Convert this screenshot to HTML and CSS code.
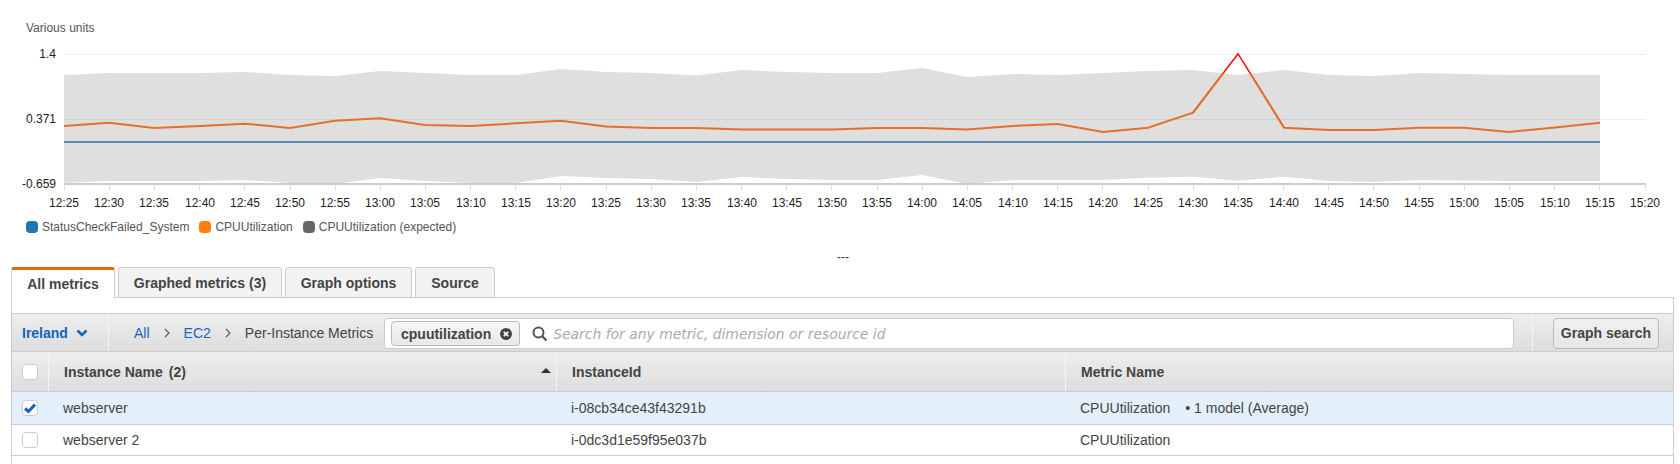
FILE: index.html
```html
<!DOCTYPE html>
<html lang="en">
<head>
<meta charset="utf-8">
<title>Metrics</title>
<link rel="stylesheet" href="styles.css">
</head>
<body>
<section class="chart">
  <svg class="plot" width="1680" height="216" viewBox="0 0 1680 216">
    <defs>
      <clipPath id="band-clip"><polygon points="64,75 109,73 154,73 200,73 245,72 290,75 335,76 380,71 425,73 471,75 516,75 561,69 606,72 651,73 696,75.5 742,70 787,72 832,73 877,73 922,68 967,77 1013,74 1058,75 1103,73 1148,71 1193,70 1238,75 1284,70 1329,75 1374,76 1419,73 1464,74 1509,75 1555,75 1600,75 1600,181 1555,181 1509,181 1464,180.5 1419,180 1374,182 1329,181 1284,176.7 1238,180.7 1193,176.7 1148,177.7 1103,180 1058,180 1013,180 967,184 922,175 877,180 832,180 787,179 742,177 696,182 651,179 606,178 561,176 516,183 471,183 425,181 380,178 335,184 290,183 245,180 200,181 154,181 109,181 64,183"/></clipPath>
    </defs>
    <text class="unit" x="26" y="32">Various units</text>
    <polygon class="band" points="64,75 109,73 154,73 200,73 245,72 290,75 335,76 380,71 425,73 471,75 516,75 561,69 606,72 651,73 696,75.5 742,70 787,72 832,73 877,73 922,68 967,77 1013,74 1058,75 1103,73 1148,71 1193,70 1238,75 1284,70 1329,75 1374,76 1419,73 1464,74 1509,75 1555,75 1600,75 1600,181 1555,181 1509,181 1464,180.5 1419,180 1374,182 1329,181 1284,176.7 1238,180.7 1193,176.7 1148,177.7 1103,180 1058,180 1013,180 967,184 922,175 877,180 832,180 787,179 742,177 696,182 651,179 606,178 561,176 516,183 471,183 425,181 380,178 335,184 290,183 245,180 200,181 154,181 109,181 64,183"/>
    <path class="grid" d="M64 54.5H1646M64 119.5H1646"/>
    <path class="axis" d="M64 184H1646"/>
    <path class="ticks" d="M64.5 185v5M109.5 185v5M154.5 185v5M199.5 185v5M244.5 185v5M290.5 185v5M335.5 185v5M380.5 185v5M425.5 185v5M470.5 185v5M515.5 185v5M560.5 185v5M606.5 185v5M651.5 185v5M696.5 185v5M741.5 185v5M786.5 185v5M831.5 185v5M877.5 185v5M922.5 185v5M967.5 185v5M1012.5 185v5M1057.5 185v5M1102.5 185v5M1148.5 185v5M1193.5 185v5M1238.5 185v5M1283.5 185v5M1328.5 185v5M1373.5 185v5M1419.5 185v5M1464.5 185v5M1509.5 185v5M1554.5 185v5M1599.5 185v5M1645.5 185v5"/>
    <path class="blue" d="M64 142H1600"/>
    <polyline class="red" points="1193,112.7 1238,53.7 1284,127.7"/>
    <polyline class="orange" clip-path="url(#band-clip)" points="64,126 109,122.7 154,128 200,126 245,123.7 290,128 335,120.7 380,118.3 425,125 471,126 516,123.3 561,120.7 606,126.4 651,128 696,128 742,129.6 787,129.6 832,129.6 877,128 922,128 967,129.6 1013,126 1058,124 1103,132 1148,127.7 1193,112.7 1238,53.7 1284,127.7 1329,130 1374,130 1419,127.7 1464,127.7 1509,132 1555,127.5 1600,122.7"/>
    <g class="ylabels">
      <text x="56" y="58">1.4</text>
      <text x="56" y="123">0.371</text>
      <text x="56" y="188">-0.659</text>
    </g>
    <g class="xlabels">
      <text x="64" y="207">12:25</text><text x="109" y="207">12:30</text><text x="154" y="207">12:35</text><text x="200" y="207">12:40</text><text x="245" y="207">12:45</text><text x="290" y="207">12:50</text><text x="335" y="207">12:55</text><text x="380" y="207">13:00</text><text x="425" y="207">13:05</text><text x="471" y="207">13:10</text><text x="516" y="207">13:15</text><text x="561" y="207">13:20</text><text x="606" y="207">13:25</text><text x="651" y="207">13:30</text><text x="696" y="207">13:35</text><text x="742" y="207">13:40</text><text x="787" y="207">13:45</text><text x="832" y="207">13:50</text><text x="877" y="207">13:55</text><text x="922" y="207">14:00</text><text x="967" y="207">14:05</text><text x="1013" y="207">14:10</text><text x="1058" y="207">14:15</text><text x="1103" y="207">14:20</text><text x="1148" y="207">14:25</text><text x="1193" y="207">14:30</text><text x="1238" y="207">14:35</text><text x="1284" y="207">14:40</text><text x="1329" y="207">14:45</text><text x="1374" y="207">14:50</text><text x="1419" y="207">14:55</text><text x="1464" y="207">15:00</text><text x="1509" y="207">15:05</text><text x="1555" y="207">15:10</text><text x="1600" y="207">15:15</text><text x="1645" y="207">15:20</text>
    </g>
  </svg>
  <ul class="legend">
    <li class="legend-item"><span class="swatch swatch-blue"></span>StatusCheckFailed_System</li>
    <li class="legend-item"><span class="swatch swatch-orange"></span>CPUUtilization</li>
    <li class="legend-item"><span class="swatch swatch-grey"></span>CPUUtilization (expected)</li>
  </ul>
  <div class="resize-handle">---</div>
</section>

<nav class="tabs">
  <div class="tab tab-active">All metrics</div>
  <div class="tab tab-2">Graphed metrics (3)</div>
  <div class="tab tab-3">Graph options</div>
  <div class="tab tab-4">Source</div>
</nav>

<section class="panel">
  <div class="filter-bar">
    <div class="region">Ireland
      <svg class="region-chevron" width="12" height="8" viewBox="0 0 12 8"><path d="M1.5 1.500 6 6l4.500-4.500" fill="none" stroke="#16b" stroke-width="2.600"/></svg>
    </div>
    <div class="crumbs">
      <a class="crumb-link crumb-all">All</a>
      <svg class="crumb-sep" width="6" height="10" viewBox="0 0 6 10"><path d="M1 1l4 4-4 4" fill="none" stroke="#555" stroke-width="1.100"/></svg>
      <a class="crumb-link crumb-ec2">EC2</a>
      <svg class="crumb-sep" width="6" height="10" viewBox="0 0 6 10"><path d="M1 1l4 4-4 4" fill="none" stroke="#555" stroke-width="1.100"/></svg>
      <span class="crumb-current">Per-Instance Metrics</span>
    </div>
    <div class="search">
      <div class="token">cpuutilization
        <svg class="token-x" width="12" height="12" viewBox="0 0 12 12"><circle cx="6" cy="6" r="6" fill="#444"/><path d="M3.800 3.800l4.400 4.400M8.200 3.800l-4.400 4.400" stroke="#fff" stroke-width="1.700"/></svg>
      </div>
      <svg class="search-icon" width="16" height="16" viewBox="0 0 16 16"><circle cx="6.500" cy="6.500" r="5" fill="none" stroke="#555" stroke-width="2"/><path d="M10 10l4.500 4.500" stroke="#555" stroke-width="2.400"/></svg>
      <span class="placeholder">Search for any metric, dimension or resource id</span>
    </div>
    <div class="graph-search"><div class="btn">Graph search</div></div>
  </div>

  <div class="row row-head">
    <div class="cell cell-check"><span class="box"></span></div>
    <div class="cell cell-name">Instance Name<span class="count">(2)</span>
      <svg class="sort" width="10" height="5" viewBox="0 0 10 5"><path d="M5 0l5 5H0z" fill="#333"/></svg>
    </div>
    <div class="cell cell-id">InstanceId</div>
    <div class="cell cell-metric">Metric Name</div>
  </div>
  <div class="row row-selected">
    <div class="cell cell-check"><span class="box"><svg width="12" height="10" viewBox="0 0 12 10"><path d="M1 5.500 4.500 8.500 11 1.500" fill="none" stroke="#16b" stroke-width="3"/></svg></span></div>
    <div class="cell cell-name">webserver</div>
    <div class="cell cell-id">i-08cb34ce43f43291b</div>
    <div class="cell cell-metric">CPUUtilization<span class="model">• 1 model (Average)</span></div>
  </div>
  <div class="row row-plain">
    <div class="cell cell-check"><span class="box"></span></div>
    <div class="cell cell-name">webserver 2</div>
    <div class="cell cell-id">i-0dc3d1e59f95e037b</div>
    <div class="cell cell-metric">CPUUtilization</div>
  </div>
</section>
</body>
</html>
```

FILE: styles.css
```css
* { box-sizing: border-box; }
html, body { margin: 0; height: 464px; overflow: hidden; background: #fff; }
body { font-family: "Liberation Sans", Arial, sans-serif; font-size: 14px; color: #444; }

/* chart */
.chart { height: 267px; }
.plot { display: block; font-size: 12px; }
.unit { fill: #555; }
.band { fill: #dfdfdf; }
.grid { stroke: #000; stroke-opacity: .07; stroke-width: 1; fill: none; }
.axis { stroke: #ccc; stroke-width: 2; fill: none; }
.ticks { stroke: #ddd; stroke-width: 1; fill: none; }
.blue { stroke: #5b8bb5; stroke-width: 2; fill: none; }
.red { stroke: #f00; stroke-width: 1.500; fill: none; }
.orange { stroke: #e4712b; stroke-width: 2; fill: none; }
.ylabels text { fill: #222; text-anchor: end; }
.xlabels text { fill: #222; text-anchor: middle; }
.legend { list-style: none; display: flex; gap: 10px; margin: 0; padding: 1px 0 0 26px; font-size: 12px; color: #555; height: 20px; }
.legend-item { display: flex; align-items: center; gap: 4px; line-height: 16px; }
.swatch { width: 12px; height: 12px; border-radius: 4px; display: block; }
.swatch-blue { background: #1f77b4; }
.swatch-orange { background: #ff7f0e; }
.swatch-grey { background: #666; }
.resize-handle { text-align: center; font-size: 12px; line-height: 14px; color: #333; margin-top: 14px; padding-left: 6px; }

/* tabs */
.tabs { display: flex; gap: 3px; padding-left: 11px; height: 31px; position: relative; z-index: 1; font-weight: bold; }
.tab { height: 31px; background: #f2f2f2; border: 1px solid #ccc; border-radius: 3px 3px 0 0; color: #444; text-align: center; line-height: 31px; }
.tab-active { width: 104px; background: #fff; border-top: 3px solid #dd6b10; border-bottom: 0; line-height: 29px; }
.tab-2 { width: 164px; }
.tab-3 { width: 127px; }
.tab-4 { width: 80px; }

/* panel */
.panel { margin: -1px 6px 0 11px; border: 1px solid #ccc; padding-top: 15px; height: 200px; }
.filter-bar { display: flex; height: 39px; border-top: 1px solid #ccc; border-bottom: 1px solid #ccc; background: linear-gradient(#eee, #ddd); }
.region { width: 97px; display: flex; align-items: center; gap: 8px; padding-left: 10px; color: #16b; font-weight: bold; border-right: 1px solid #f5f5f5; }
.crumbs { display: flex; align-items: center; padding-left: 25px; width: 275px; flex: none; padding-top: 1px; }
.crumb-link { color: #16b; }
.crumb-sep { margin: 0 14px 0 14px; }
.crumb-current { color: #444; white-space: nowrap; }
.search { width: 1130px; height: 31px; margin-top: 4px; background: #fff; border: 1px solid #ccc; border-radius: 4px; display: flex; align-items: center; padding-left: 6px; }
.token { display: flex; align-items: center; gap: 9px; height: 25px; padding: 0 7px 0 9px; font-weight: bold; border: 1px solid #bbb; border-radius: 4px; background: linear-gradient(#f6f6f6, #e8e8e8); color: #444; }
.search-icon { margin-left: 12px; margin-top: 1px; }
.placeholder { margin-left: 5px; font-family: "DejaVu Sans", sans-serif; font-style: italic; font-size: 13.900px; color: #aaa; white-space: nowrap; }
.graph-search { flex: 1; margin-left: 18px; border-left: 1px solid #f5f5f5; padding: 4px 0 0 20px; }
.btn { width: 106px; height: 31px; border: 1px solid #bbb; border-radius: 4px; background: linear-gradient(#f0f0f0, #e6e6e6); font-weight: bold; text-align: center; line-height: 29px; }

/* table */
.row { display: grid; grid-template-columns: 36px 508px 509px 1fr; border-bottom: 1px solid #ccc; }
.row-head { height: 40px; background: linear-gradient(#eee, #ddd); font-weight: bold; }
.row-selected { height: 33px; background: #e3f0fc; }
.row-plain { height: 31px; }
.cell { display: flex; align-items: center; padding-left: 15px; color: #444; min-width: 0; }
.row-head .cell { border-left: 1px solid #f5f5f5; position: relative; }
.row-head .cell-check { border-left: 0; }
.cell-check, .row-head .cell-check { padding-left: 10px; }
.box { width: 16px; height: 16px; border: 1px solid #ccc; border-radius: 4px; background: #fff; display: flex; align-items: center; justify-content: center; }
.count { margin-left: 6px; }
.sort { position: absolute; right: 5px; top: 16px; }
.model { margin-left: 15px; }
```
